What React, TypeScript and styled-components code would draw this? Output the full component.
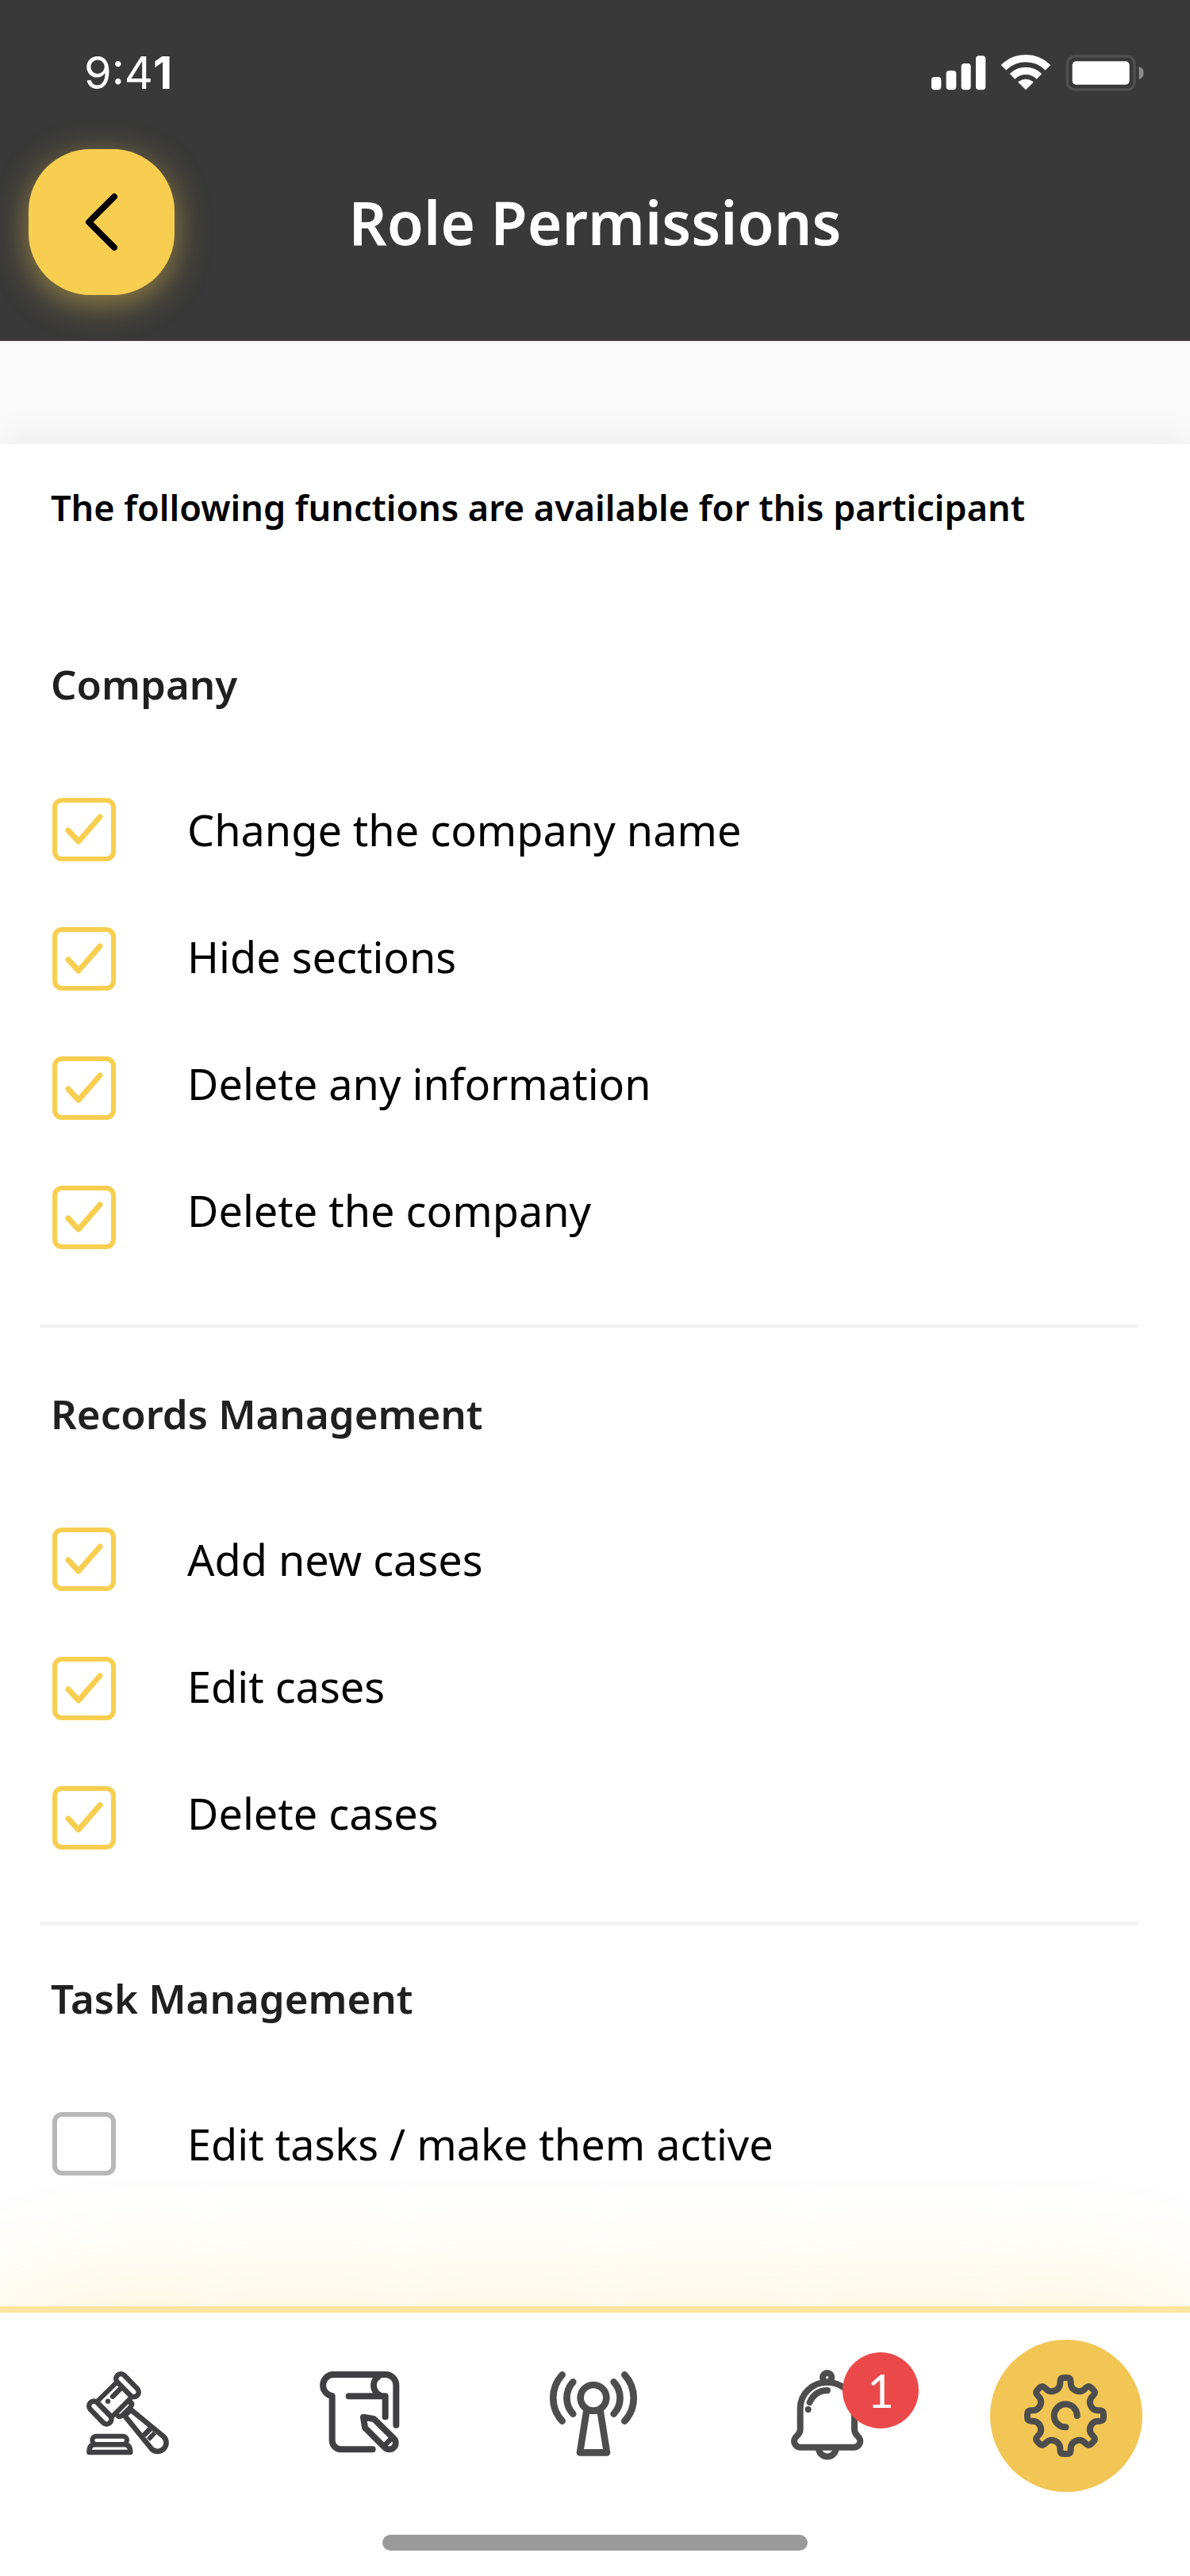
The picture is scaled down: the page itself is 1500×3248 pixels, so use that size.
import React, { useState } from "react";
import styled, { createGlobalStyle } from "styled-components";

const color = {
  ink: "#000000",
  heading: "#202020",
  dark: "#393939",
  yellow: "#f8ce50",
  gold: "#f2c655",
  navLine: "#fbe49c",
  line: "#f0f0f0",
  box: "#b8b8b8",
  icon: "#404042",
  iconSoft: "#4d4d4d",
  red: "#eb4949",
};

const GlobalStyle = createGlobalStyle`
  *, *::before, *::after { box-sizing: border-box; }
  body {
    margin: 0;
    background: #fff;
    color: ${color.ink};
    font-family: "Noto Sans", "Open Sans", sans-serif;
  }
`;

const Screen = styled.div`
  min-height: 100vh;
  display: flex;
  flex-direction: column;
  background: #fafafa;
  overflow: hidden;
`;

const Header = styled.header`
  background: ${color.dark};
  border-bottom: 1px solid #4d4649;
  padding-bottom: 57px;
`;

const StatusBar = styled.div`
  display: flex;
  justify-content: space-between;
  align-items: center;
  height: 184px;
  padding: 0 58px 0 106px;
`;

const Clock = styled.time`
  font-family: Inter, "Liberation Sans", sans-serif;
  font-size: 56px;
  line-height: 64px;
  font-weight: 400;
  color: #fff;

  b { font-weight: 700; }
`;

const TitleBar = styled.div`
  display: grid;
  grid-template-columns: 184px 1fr 184px;
  align-items: center;
  padding: 4px 36px 0;
`;

const BackButton = styled.button`
  display: grid;
  place-items: center;
  width: 184px;
  height: 184px;
  padding: 0;
  border: 0;
  border-radius: 78px;
  background: ${color.yellow};
  box-shadow: 0 10px 40px rgba(248, 206, 80, 0.5);
  cursor: pointer;
`;

const Title = styled.h1`
  margin: 0;
  text-align: center;
  font-size: 75px;
  line-height: 96px;
  font-weight: 600;
  color: #fff;
`;

const Card = styled.main`
  flex: 1;
  margin-top: 130px;
  padding: 40px 66px 100px 50px;
  background: #fff;
  box-shadow: 0 0 48px rgba(0, 0, 0, 0.08);
`;

const Lead = styled.p`
  margin: 0 0 142px;
  padding-left: 14px;
  font-size: 45px;
  line-height: 80px;
  font-weight: 600;
`;

const Section = styled.section<{ $top: number; $bottom: number; $ruled: boolean }>`
  padding-top: ${(p) => p.$top}px;
  padding-bottom: ${(p) => p.$bottom}px;
  border-bottom: ${(p) => (p.$ruled ? `4px solid ${color.line}` : "0")};
`;

const SectionTitle = styled.h2`
  margin: 0 0 104px;
  padding-left: 14px;
  font-size: 51px;
  line-height: 80px;
  font-weight: 600;
  color: ${color.heading};
`;

const Options = styled.div`
  display: flex;
  align-items: flex-start;
  gap: 90px;
  padding-left: 16px;
`;

const BoxColumn = styled.div`
  display: flex;
  flex-direction: column;
  gap: 83px;
`;

const LabelColumn = styled.div`
  display: flex;
  flex-direction: column;
  gap: 80px;
`;

const Tick = styled.span`
  display: grid;
  width: 80px;
  height: 80px;

  > * { grid-area: 1 / 1; }

  svg {
    pointer-events: none;
    visibility: hidden;
  }

  input:checked + svg { visibility: visible; }
`;

const Checkbox = styled.input`
  appearance: none;
  width: 80px;
  height: 80px;
  margin: 0;
  border: 6px solid ${color.box};
  border-radius: 12px;
  background: #fff;
  cursor: pointer;

  &:checked { border-color: ${color.yellow}; }
`;

const OptionLabel = styled.label`
  font-size: 54px;
  line-height: 80px;
  cursor: pointer;
`;

const NavBar = styled.nav`
  display: flex;
  flex-direction: column;
  align-items: center;
  border-top: 8px solid ${color.navLine};
  background: #fff;
  box-shadow: 0 0 170px rgba(248, 206, 80, 0.29);
  position: relative;
`;

const NavItems = styled.div`
  align-self: stretch;
  display: flex;
  justify-content: space-between;
  padding: 34px 60px 54px;
`;

const NavLink = styled.a<{ $active?: boolean }>`
  position: relative;
  display: grid;
  place-items: center;
  width: 192px;
  height: 192px;
  border-radius: 50%;
  background: ${(p) => (p.$active ? color.gold : "transparent")};
`;

const Badge = styled.span`
  position: absolute;
  top: 16px;
  right: -15px;
  width: 96px;
  height: 96px;
  border-radius: 50%;
  background: ${color.red};
  color: #fff;
  text-align: center;
  font-family: Lato, sans-serif;
  font-size: 58px;
  line-height: 96px;
`;

const HomeIndicator = styled.div`
  width: 536px;
  height: 20px;
  margin-bottom: 32px;
  border-radius: 10px;
  background: #9a9a9a;
`;

function StatusIcons() {
  return (
    <svg width="268" height="46" viewBox="43 57 804 138" role="img" aria-label="Signal, Wi-Fi and battery">
      <g fill="#fff">
        <rect x="43" y="141" width="37" height="49" rx="12" />
        <rect x="99" y="117" width="38" height="73" rx="12" />
        <rect x="156" y="90" width="36" height="100" rx="12" />
        <rect x="211" y="61" width="37" height="129" rx="12" />
        <path d="M400 190 372 162Q370 160 373 158 400 140 427 158 430 160 428 162Z" />
        <rect x="576" y="82" width="216" height="88" rx="14" />
      </g>
      <g fill="none" stroke="#fff">
        <path d="M316 106A118.500 118.500 0 0 1 484 106" strokeWidth="28" />
        <path d="M349 139A73 73 0 0 1 451 139" strokeWidth="28" />
      </g>
      <rect x="557" y="63" width="254" height="126" rx="28" fill="none" stroke="#505050" strokeWidth="10" />
      <path d="M828 102Q846 108 846 126T828 150Z" fill="#8c8c8c" />
    </svg>
  );
}

function GavelIcon() {
  return (
    <svg width="120" height="120" viewBox="108 138 360 360" fill="none" stroke={color.icon} strokeLinecap="round" strokeLinejoin="round" aria-hidden="true">
      <path d="M316 296 438 396A32 32 0 0 1 394 444L290 316Z" strokeWidth="20" />
      <path d="M396 374 372 400" strokeWidth="42" strokeLinecap="butt" />
      <path d="M395 378 373 400" stroke="#fff" strokeWidth="5" />
      <path d="M265 188 186 265 243 322 318 247Z" fill="#fff" strokeWidth="18" />
      <path d="M272 313 311 274" strokeWidth="35" />
      <path d="M273 309 305 277" stroke="#fff" strokeWidth="5" />
      <path d="M277 178 326 228M175 281 223 331" strokeWidth="56" />
      <path d="M277 178 326 228M175 281 223 331" stroke="#fff" strokeWidth="17" />
      <path d="M278 213 246 245M228 263h.1" strokeWidth="19" />
      <rect x="169" y="395" width="131" height="31" rx="15" strokeWidth="18" />
      <path d="M157 456H313Q313 427 292 427H178Q157 427 157 456Z" strokeWidth="19" />
    </svg>
  );
}

function ScrollIcon() {
  return (
    <svg width="120" height="120" viewBox="69 138 360 360" fill="none" stroke={color.icon} strokeWidth="24" strokeLinecap="round" strokeLinejoin="round" aria-hidden="true">
      <path d="M388 353V203A40 40 0 0 0 348 162H146A41 41 0 0 0 146 243V410A34 34 0 0 0 180 445H299" />
      <path d="M209 244H347V322M347 244A41 41 0 0 1 320 170" />
      <path d="M264 323 304 330 379 404A24 24 0 0 1 345 438L270 363Z" />
      <path d="M372 402 342 432" strokeWidth="20" strokeLinecap="butt" />
    </svg>
  );
}

function AntennaIcon() {
  return (
    <svg width="120" height="120" viewBox="90 138 360 360" fill="none" stroke={color.iconSoft} strokeWidth="26" strokeLinecap="round" strokeLinejoin="round" aria-hidden="true">
      <circle cx="264" cy="250" r="49" />
      <path d="M238 300 213 457H315L290 300" />
      <path d="M187 190A89 89 0 0 0 187 311M146 163A129 129 0 0 0 146 338" />
      <path d="M341 190A89 89 0 0 1 341 311M382 163A129 129 0 0 1 382 338" />
    </svg>
  );
}

function BellIcon() {
  return (
    <svg width="120" height="120" viewBox="81 138 360 360" fill="none" stroke={color.iconSoft} strokeWidth="24" strokeLinecap="round" strokeLinejoin="round" aria-hidden="true">
      <circle cx="248" cy="173" r="17" />
      <path d="M147 437H349A23 23 0 0 0 364 396Q351 383 351 370V290A102 98 0 0 0 146 290V370Q146 383 132 396A23 23 0 0 0 147 437Z" />
      <path d="M216 445A33 33 0 0 0 281 445" strokeLinecap="butt" />
      <path d="M182 267Q202 222 249 222M176 294h.1" />
    </svg>
  );
}

const rotate = (x: number, y: number, degrees: number) => {
  const a = (degrees * Math.PI) / 180;
  const rx = x * Math.cos(a) - y * Math.sin(a);
  const ry = x * Math.sin(a) + y * Math.cos(a);
  return `${rx.toFixed(1)} ${ry.toFixed(1)}`;
};

// Eight identical teeth joined by round valleys, centred on the origin.
const gearPath =
  Array.from({ length: 8 }, (_, i) => {
    const p = (x: number, y: number) => rotate(x, y, i * 45);
    const valley = rotate(-20, -124, (i + 1) * 45);
    return `${i ? "L" : "M"}${p(-20, -128)}Q${p(-20, -144)} ${p(-6, -144)}L${p(6, -144)}Q${p(20, -144)} ${p(20, -128)}L${p(20, -124)}A31.500 31.500 0 0 0 ${valley}`;
  }).join("") + "Z";

function GearIcon() {
  return (
    <svg width="120" height="120" viewBox="-177 -180 360 360" fill="none" stroke={color.iconSoft} strokeWidth="24" strokeLinecap="round" strokeLinejoin="round" aria-hidden="true">
      <path d={gearPath} />
      <path d="M44 0A43.500 43.500 0 1 0 1 43" />
    </svg>
  );
}

type Permission = { id: string; label: string; on: boolean };
type Group = { title: string; top: number; bottom: number; items: Permission[] };

const groups: Group[] = [
  {
    title: "Company",
    top: 0,
    bottom: 95,
    items: [
      { id: "rename", label: "Change the company name", on: true },
      { id: "hide", label: "Hide sections", on: true },
      { id: "delete-info", label: "Delete any information", on: true },
      { id: "delete-company", label: "Delete the company", on: true },
    ],
  },
  {
    title: "Records Management",
    top: 68,
    bottom: 91,
    items: [
      { id: "add-case", label: "Add new cases", on: true },
      { id: "edit-case", label: "Edit cases", on: true },
      { id: "delete-case", label: "Delete cases", on: true },
    ],
  },
  {
    title: "Task Management",
    top: 52,
    bottom: 0,
    items: [{ id: "edit-task", label: "Edit tasks / make them active", on: false }],
  },
];

function PermissionGroup({ group, ruled }: { group: Group; ruled: boolean }) {
  const [on, setOn] = useState(() => group.items.map((item) => item.on));
  const toggle = (index: number) => setOn(on.map((value, i) => (i === index ? !value : value)));

  return (
    <Section $top={group.top} $bottom={group.bottom} $ruled={ruled}>
      <SectionTitle>{group.title}</SectionTitle>
      <Options>
        <BoxColumn>
          {group.items.map((item, i) => (
            <Tick key={item.id}>
              <Checkbox type="checkbox" id={item.id} checked={on[i]} onChange={() => toggle(i)} />
              <svg width="80" height="80" viewBox="0 0 80 80" fill="none" stroke={color.yellow} strokeWidth="7" strokeLinecap="round" strokeLinejoin="round" aria-hidden="true">
                <path d="M20 41 33 55 60 24" />
              </svg>
            </Tick>
          ))}
        </BoxColumn>
        <LabelColumn>
          {group.items.map((item) => (
            <OptionLabel key={item.id} htmlFor={item.id}>{item.label}</OptionLabel>
          ))}
        </LabelColumn>
      </Options>
    </Section>
  );
}

export default function App() {
  return (
    <Screen>
      <GlobalStyle />
      <Header>
        <StatusBar>
          <Clock>9:4<b>1</b></Clock>
          <StatusIcons />
        </StatusBar>
        <TitleBar>
          <BackButton type="button" aria-label="Back">
            <svg width="60" height="80" viewBox="0 0 60 80" fill="none" stroke="#000" strokeWidth="8" strokeLinecap="round" strokeLinejoin="round" aria-hidden="true">
              <path d="M46 8 14 40 46 72" />
            </svg>
          </BackButton>
          <Title>Role Permissions</Title>
        </TitleBar>
      </Header>
      <Card>
        <Lead>The following functions are available for this participant</Lead>
        {groups.map((group, i) => (
          <PermissionGroup key={group.title} group={group} ruled={i < groups.length - 1} />
        ))}
      </Card>
      <NavBar aria-label="Main">
        <NavItems>
          <NavLink href="#cases" aria-label="Cases"><GavelIcon /></NavLink>
          <NavLink href="#records" aria-label="Records"><ScrollIcon /></NavLink>
          <NavLink href="#broadcast" aria-label="Broadcast"><AntennaIcon /></NavLink>
          <NavLink href="#alerts" aria-label="Notifications"><BellIcon /><Badge>1</Badge></NavLink>
          <NavLink href="#settings" aria-label="Settings" aria-current="page" $active><GearIcon /></NavLink>
        </NavItems>
        <HomeIndicator />
      </NavBar>
    </Screen>
  );
}
